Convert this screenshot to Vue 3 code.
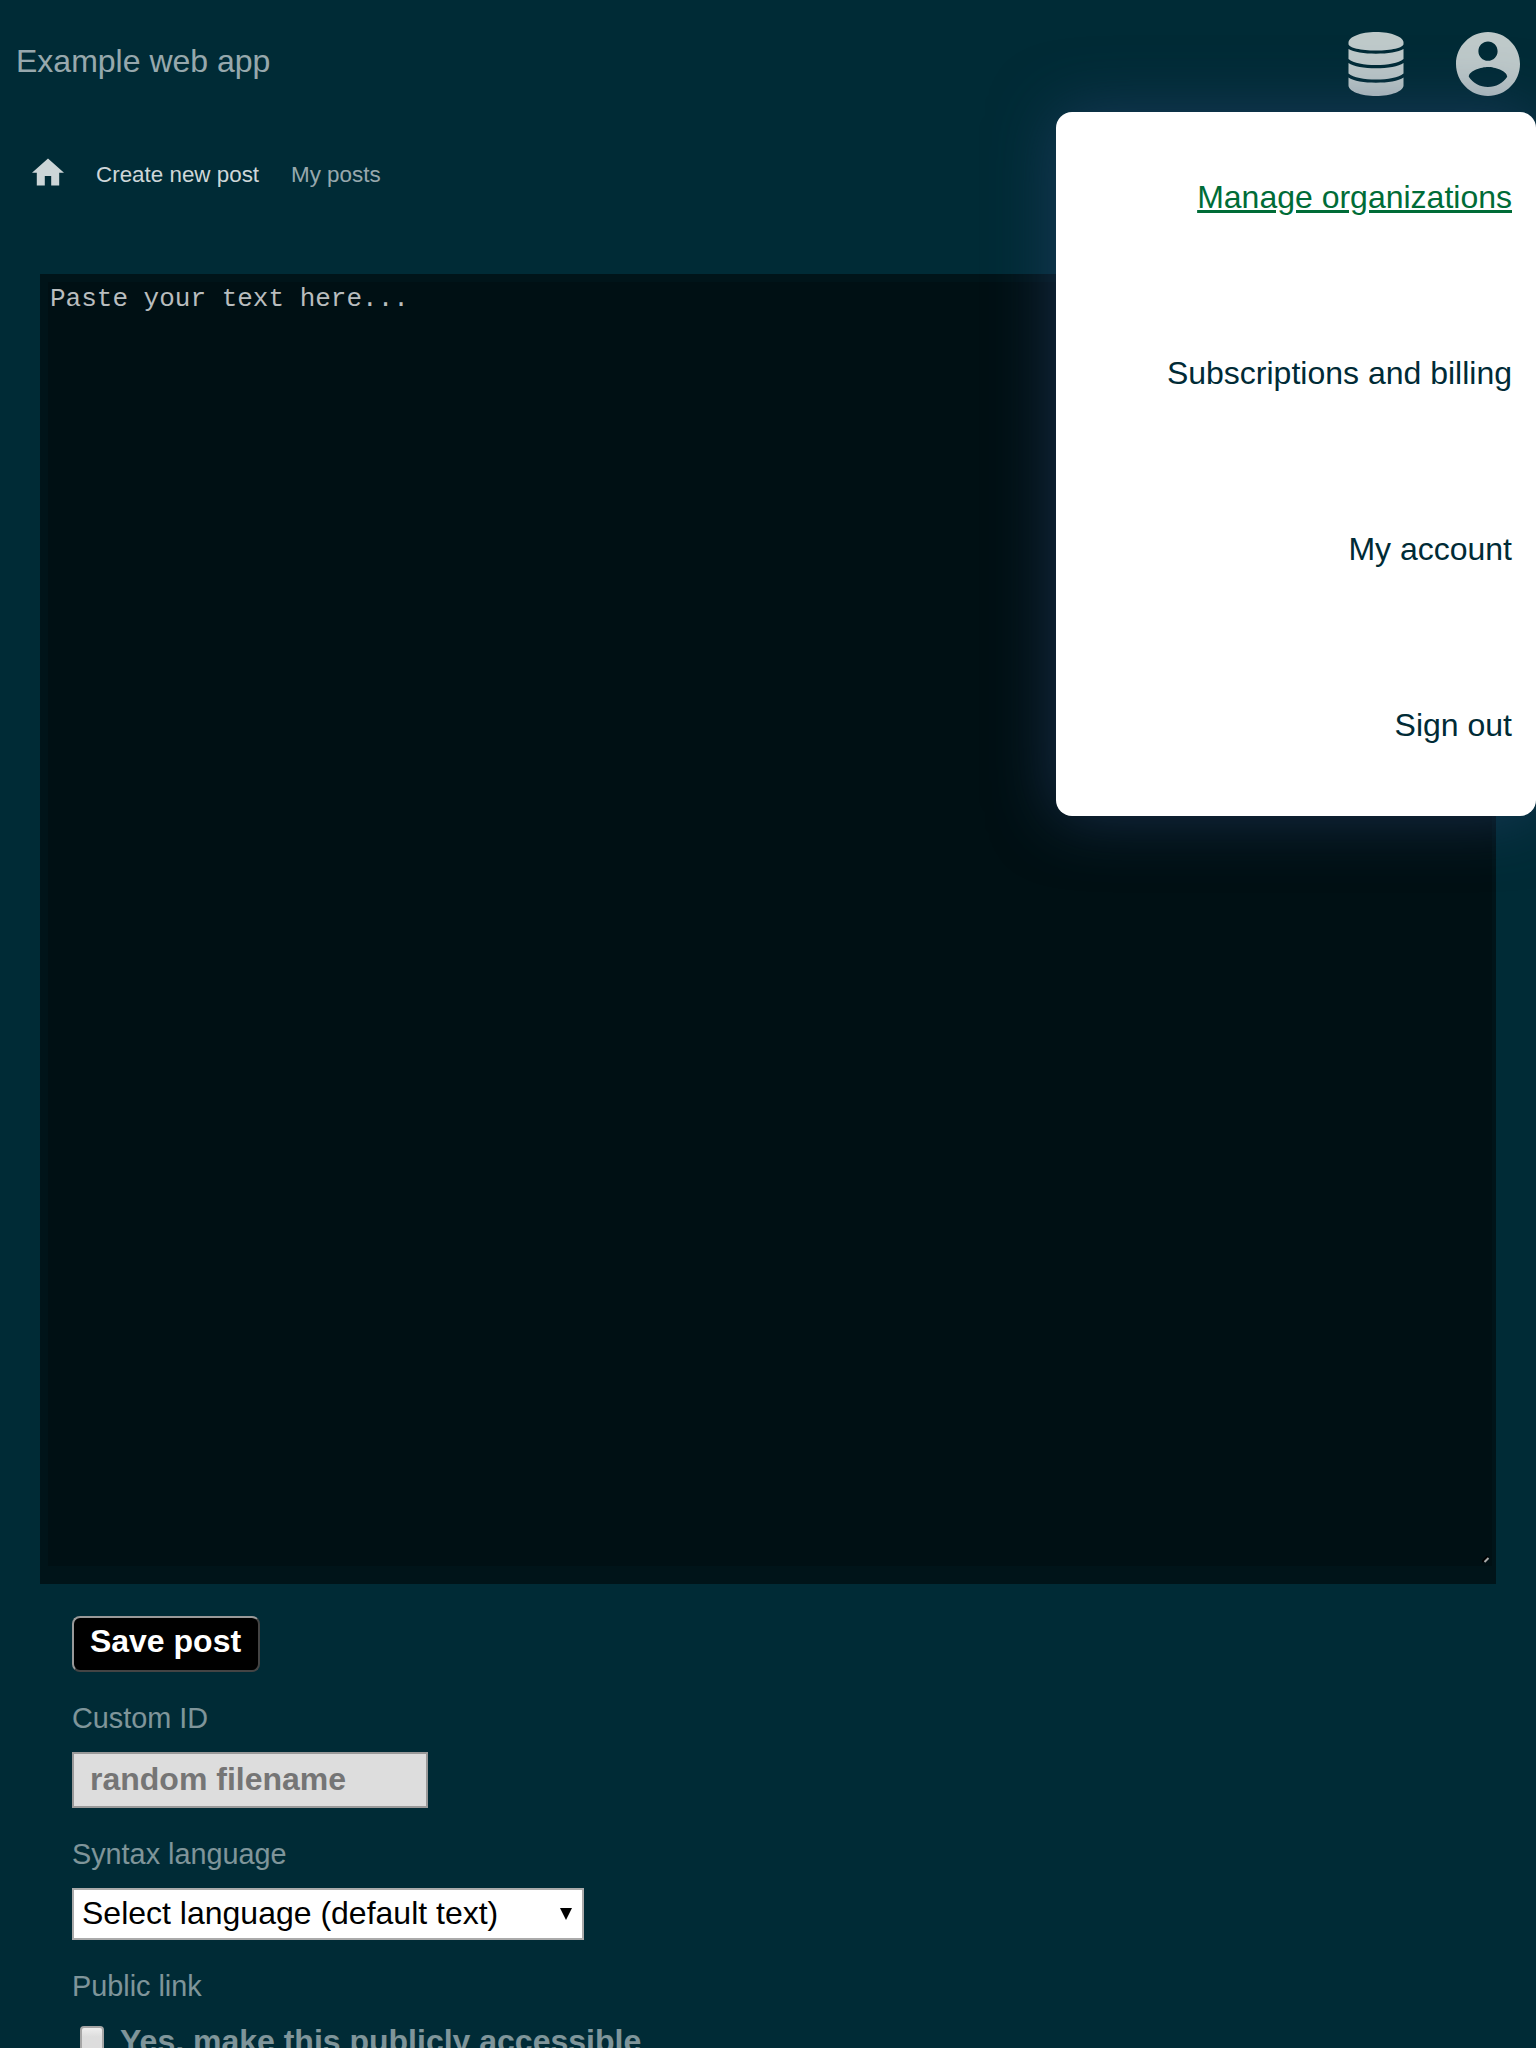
<script setup>
const menu = ['Manage organizations', 'Subscriptions and billing', 'My account', 'Sign out']
</script>

<template>
  <div class="app">
    <header class="top">
      <a class="brand">Example web app</a>
      <div class="actions">
        <svg class="db" viewBox="-0.5 0 57 64" preserveAspectRatio="none">
          <path d="M28 0C43.500 0 56 4.800 56 10.700V12C56 15.800 43.500 18.500 28 18.500S0 15.800 0 12V10.700C0 4.800 12.500 0 28 0z" />
          <path d="M0 17C5 20 16 21.700 28 21.700S51 20 56 17V27C51 31 40 33 28 33S5 31 0 27z" />
          <path d="M0 31C5 34.500 16 36.300 28 36.300S51 34.500 56 31V41.500C51 45.500 40 47.500 28 47.500S5 45.500 0 41.500z" />
          <path d="M0 45.500C5 49 16 50.700 28 50.700S51 49 56 45.500V53.500C56 59.200 43.500 64 28 64S0 59.200 0 53.500z" />
        </svg>
        <svg class="user" viewBox="2 2 20 20">
          <path d="M12 2C6.480 2 2 6.480 2 12s4.480 10 10 10 10-4.480 10-10S17.520 2 12 2zm0 3c1.660 0 3 1.340 3 3s-1.340 3-3 3-3-1.340-3-3 1.340-3 3-3zm0 14.200c-2.500 0-4.710-1.280-6-3.220.030-1.990 4-3.080 6-3.080 1.990 0 5.970 1.090 6 3.080-1.290 1.940-3.500 3.220-6 3.220z" />
        </svg>
        <nav class="menu">
          <a v-for="(item, i) in menu" :key="item" :class="{ active: i === 0 }">{{ item }}</a>
        </nav>
      </div>
    </header>

    <nav class="tabs">
      <svg class="home" viewBox="2 3 20 17"><path d="M10 20v-6h4v6h5v-8h3L12 3 2 12h3v8z" /></svg>
      <a class="current">Create new post</a>
      <a>My posts</a>
    </nav>

    <main>
      <div class="editor">
        <textarea placeholder="Paste your text here..."></textarea>
        <svg class="grip" viewBox="0 0 8 8"><path class="shade" d="M0 6L6 0" /><path d="M2.500 6L6.500 2" /></svg>
      </div>
      <form class="fields">
        <button type="button">Save post</button>
        <label class="name id">Custom ID</label>
        <input class="text" placeholder="random filename" />
        <label class="name lang">Syntax language</label>
        <div class="select">
          <span>Select language (default text)</span>
          <svg viewBox="0 0 12 12"><path d="M0 0h12L6 12z" /></svg>
        </div>
        <label class="name link">Public link</label>
        <label class="check"><i></i><span>Yes, make this publicly accessible</span></label>
      </form>
    </main>
  </div>
</template>

<style>
body { margin: 0; background: #002b36; }
</style>

<style scoped>
* { box-sizing: border-box; }
.app {
  height: 2048px;
  overflow: hidden;
  background: #002b36;
  color: rgba(255, 255, 255, 0.6);
  font: 32px/38px "Liberation Sans", Arial, sans-serif;
}
.top {
  height: 112px;
  padding: 0 16px;
  display: flex;
  justify-content: space-between;
}
.brand { margin-top: 42px; }
.actions {
  position: relative;
  display: flex;
  gap: 52px;
  padding-top: 32px;
  fill: #bfcaca;
}
.db { width: 56px; height: 64px; }
.user { width: 64px; height: 64px; }
.menu {
  position: absolute;
  z-index: 2;
  top: 112px;
  right: -16px;
  width: 480px;
  border-radius: 16px;
  background: #fff;
  box-shadow: 0 0 64px rgba(42, 66, 112, 0.6);
}
.menu a {
  display: block;
  height: 176px;
  padding-right: 24px;
  line-height: 170px;
  text-align: right;
  color: #002b36;
}
.menu a.active {
  color: #006c37;
  text-decoration: underline;
}
.tabs {
  height: 162px;
  padding: 46px 32px 0;
  display: flex;
  gap: 32px;
  font-size: 22.4px;
  line-height: 32px;
}
.tabs a { margin-top: 1px; }
.tabs .current { color: rgba(255, 255, 255, 0.82); }
.home { width: 32px; height: 28px; fill: #ccd5d7; }
.editor {
  position: relative;
  height: 1310px;
  margin: 0 40px;
  padding: 8px 4px 18px 8px;
  background: #001419;
}
textarea {
  display: block;
  width: 100%;
  height: 100%;
  border: 0;
  padding: 2px;
  resize: none;
  background: #001014;
  font: 26px/30px "Liberation Mono", monospace;
}
textarea::placeholder { color: #b9bdbe; opacity: 1; }
.grip {
  position: absolute;
  right: 6px;
  bottom: 20px;
  width: 8px;
  height: 8px;
  stroke: #aaa;
  stroke-width: 2;
}
.grip .shade { stroke: #000; }
.fields {
  padding: 32px 72px 0;
  display: flex;
  flex-direction: column;
  align-items: flex-start;
}
button {
  width: 188px;
  height: 56px;
  padding: 0 1px 6px 0;
  border: 2px solid;
  border-color: #999 #444 #444 #999;
  border-radius: 8px;
  background: #000;
  color: #fff;
  font: bold 32px/38px "Liberation Sans", Arial, sans-serif;
}
.name {
  height: 34px;
  font-size: 28.8px;
  line-height: 34px;
  color: rgba(255, 255, 255, 0.5);
}
.id { margin: 29px 0 17px; }
.text {
  width: 356px;
  height: 56px;
  padding: 0 16px 2px;
  border: 2px solid #999;
  border-radius: 0;
  background: #ddd;
  font: bold 32px/38px "Liberation Sans", Arial, sans-serif;
}
.text::placeholder { color: #757575; }
.lang { margin: 29px 0 17px; }
.select {
  width: 512px;
  height: 52px;
  padding: 0 10px 2px 8px;
  display: flex;
  align-items: center;
  justify-content: space-between;
  border: 2px solid #aaa;
  background: #fff;
  color: #000;
}
.select svg { width: 12px; height: 12px; margin-top: 1px; }
.link { margin: 29px 0 19px; }
.check {
  display: flex;
  margin-left: 8px;
  gap: 16px;
  color: rgba(255, 255, 255, 0.5);
  font-weight: bold;
  white-space: nowrap;
}
.check i {
  width: 24px;
  height: 26px;
  margin-top: 4px;
  border: 2px solid #a6a6a6;
  border-radius: 4px;
  background: linear-gradient(#eee, #ddd 40%);
}
</style>
